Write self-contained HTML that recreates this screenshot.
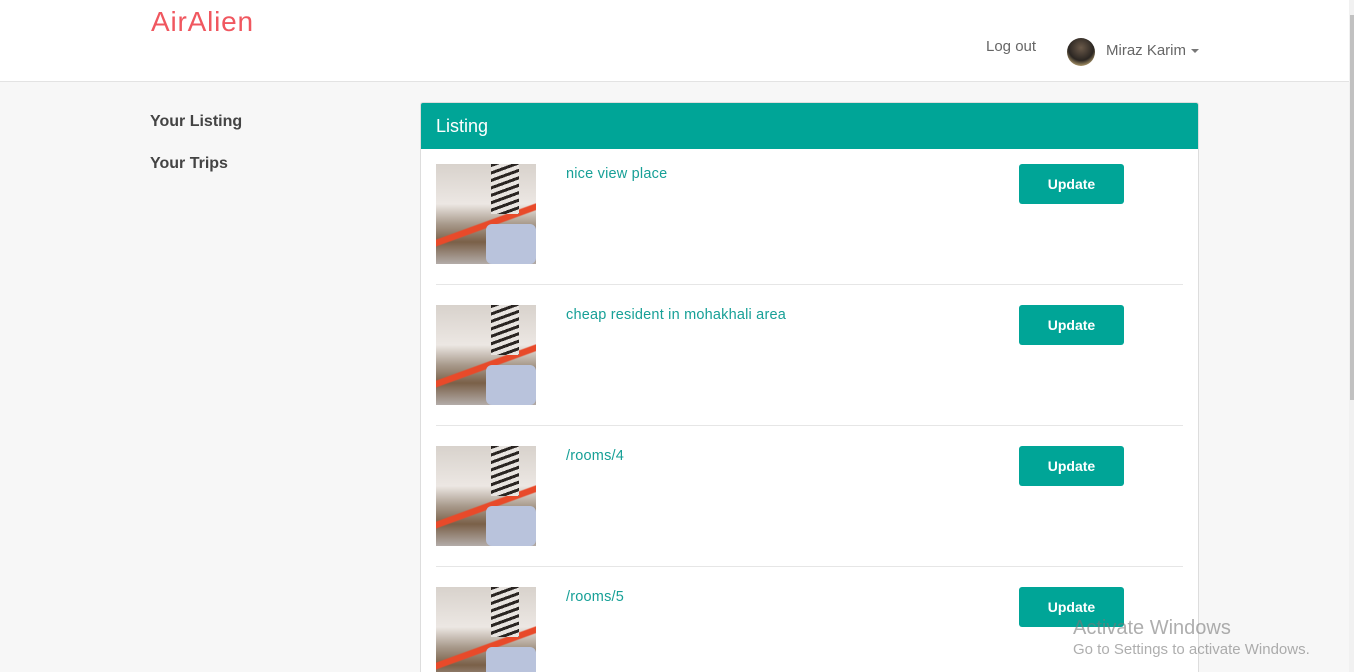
<!DOCTYPE html>
<html><head><meta charset="utf-8"><style>
*{box-sizing:border-box;margin:0;padding:0}
html,body{width:1354px;height:672px;overflow:hidden}
body{background:#f7f7f7;font-family:"Liberation Sans",sans-serif;position:relative}
.nav{position:absolute;left:0;top:0;width:1349px;height:82px;background:#fff;border-bottom:1px solid #e3e3e3}
.logo{position:absolute;left:151px;top:6px;font-size:28px;color:#f0575f;letter-spacing:.8px}
.logout{position:absolute;left:986px;top:38px;font-size:15px;color:#666}
.av{position:absolute;left:1067px;top:38px;width:28px;height:28px;border-radius:50%;background:radial-gradient(circle at 50% 35%,#6b5a4a 0,#2b2622 55%,#c9b07a 85%)}
.user{position:absolute;left:1106px;top:42px;font-size:15px;color:#666}
.caret{position:absolute;left:1191px;top:49px;border-left:4px solid transparent;border-right:4px solid transparent;border-top:4px solid #777}
.sb{position:absolute;left:1349px;top:0;width:5px;height:672px;background:#f1f1f1}
.sb div{position:absolute;left:1px;top:15px;width:4px;height:385px;background:#c1c1c1}
.side{position:absolute;left:150px;font-size:16px;font-weight:bold;color:#444}
.panel{position:absolute;left:420px;top:102px;width:779px;height:570px;background:#fff;border:1px solid #ddd;border-bottom:none;border-radius:3px 3px 0 0;overflow:hidden}
.ph{height:46px;background:#00a597;color:#fff;font-size:18px;padding:13px 15px}
.row{position:absolute;left:15px;width:747px;height:121px;border-bottom:1px solid #e6e6e6}
.img{position:absolute;left:0;top:0;width:100px;height:100px;background:
linear-gradient(160deg,transparent 55%,#e84a2a 56%,#e84a2a 60%,transparent 61%),
linear-gradient(180deg,#d8d2cc 0,#ece7e3 40%,#a89a8c 60%,#7a6048 78%,#b3aca8 100%);overflow:hidden}
.img:before{content:"";position:absolute;left:55px;top:0;width:28px;height:50px;background:repeating-linear-gradient(160deg,#2a2522 0 3px,#e8e4e0 3px 7px)}
.img:after{content:"";position:absolute;left:50px;top:60px;width:50px;height:40px;background:#b9c3dc;border-radius:6px}
.t{position:absolute;left:130px;top:2px;font-size:14.5px;color:#17a097;letter-spacing:.2px}
.btn{position:absolute;left:583px;top:0;width:105px;height:40px;background:#00a597;border-radius:3px;color:#fff;font-weight:bold;font-size:14px;text-align:center;line-height:40px}
.wm{position:absolute;left:1073px;color:rgba(120,120,120,.6)}
</style></head><body>
<div class="nav"><div class="logo">AirAlien</div><div class="logout">Log out</div><div class="av"></div><div class="user">Miraz Karim</div><div class="caret"></div></div>
<div class="sb"><div></div></div>
<div class="side" style="top:113px">Your Listing</div>
<div class="side" style="top:155px">Your Trips</div>
<div class="panel"><div class="ph">Listing</div>
<div class="row" style="top:61px"><div class="img"></div><div class="t">nice view place</div><div class="btn">Update</div></div>
<div class="row" style="top:202px"><div class="img"></div><div class="t">cheap resident in mohakhali area</div><div class="btn">Update</div></div>
<div class="row" style="top:343px"><div class="img"></div><div class="t">/rooms/4</div><div class="btn">Update</div></div>
<div class="row" style="top:484px"><div class="img"></div><div class="t">/rooms/5</div><div class="btn">Update</div></div>
</div>
<div class="wm" style="top:617px;font-size:20px">Activate Windows</div>
<div class="wm" style="top:641px;font-size:15px">Go to Settings to activate Windows.</div>
</body></html>
